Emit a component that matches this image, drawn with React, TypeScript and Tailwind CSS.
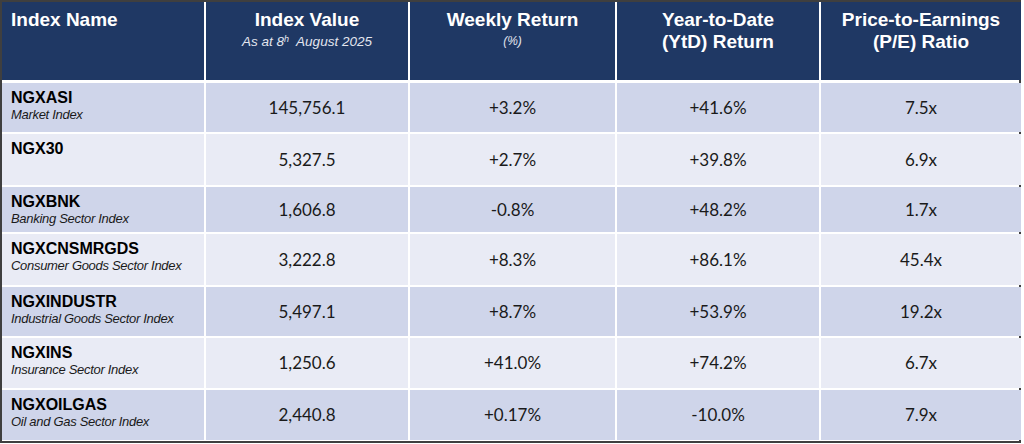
import React from "react";

type Row = {
  code: string;
  label?: string;
  value: string;
  weekly: string;
  ytd: string;
  pe: string;
  h: string;
  bg: string;
};

const rows: Row[] = [
  { code: "NGXASI", label: "Market Index", value: "145,756.1", weekly: "+3.2%", ytd: "+41.6%", pe: "7.5x", h: "h-[49px]", bg: "bg-[#cfd5ea]" },
  { code: "NGX30", value: "5,327.5", weekly: "+2.7%", ytd: "+39.8%", pe: "6.9x", h: "h-[51px]", bg: "bg-[#e9ebf5]" },
  { code: "NGXBNK", label: "Banking Sector Index", value: "1,606.8", weekly: "-0.8%", ytd: "+48.2%", pe: "1.7x", h: "h-[45px]", bg: "bg-[#cfd5ea]" },
  { code: "NGXCNSMRGDS", label: "Consumer Goods Sector Index", value: "3,222.8", weekly: "+8.3%", ytd: "+86.1%", pe: "45.4x", h: "h-[51px]", bg: "bg-[#e9ebf5]" },
  { code: "NGXINDUSTR", label: "Industrial Goods Sector Index", value: "5,497.1", weekly: "+8.7%", ytd: "+53.9%", pe: "19.2x", h: "h-[49px]", bg: "bg-[#cfd5ea]" },
  { code: "NGXINS", label: "Insurance Sector Index", value: "1,250.6", weekly: "+41.0%", ytd: "+74.2%", pe: "6.7x", h: "h-[50px]", bg: "bg-[#e9ebf5]" },
  { code: "NGXOILGAS", label: "Oil and Gas Sector Index", value: "2,440.8", weekly: "+0.17%", ytd: "-10.0%", pe: "7.9x", h: "h-[50px]", bg: "bg-[#cfd5ea]" },
];

const cols = "grid grid-cols-[202px_202px_205px_202px_200px] gap-x-[2px]";
const arial = "font-['Liberation_Sans',Arial,sans-serif]";
const num = "font-['Lato','Open_Sans',sans-serif] text-[17px] text-[#1a1a1a]";

export default function App() {
  return (
    <div className="w-[1024px] h-[444px] bg-white">
      <div className={`w-[1021px] h-[443px] border-2 border-[#3f3f3f] bg-white flex flex-col ${arial}`}>
        {/* Header */}
        <div className={`${cols} h-[78px] text-white text-[19px] leading-[22px] font-bold`}>
          <div className="bg-[#1f3864] pl-[9px] pt-[7px]">Index Name</div>
          <div className="bg-[#1f3864] pt-[7px] text-center">
            <div>Index Value</div>
            <div className="text-[13.5px] leading-[18px] font-normal italic text-[#e3e6ef] mt-[2px]">
              As at 8<sup className="text-[9px]">h</sup>&nbsp; August 2025
            </div>
          </div>
          <div className="bg-[#1f3864] pt-[7px] text-center">
            <div>Weekly Return</div>
            <div className="text-[12px] leading-[16px] font-normal italic text-[#e3e6ef] mt-[2px]">(%)</div>
          </div>
          <div className="bg-[#1f3864] pt-[7px] text-center">
            <div>Year-to-Date</div>
            <div>(YtD) Return</div>
          </div>
          <div className="bg-[#1f3864] pt-[7px] text-center">
            <div>Price-to-Earnings</div>
            <div>(P/E) Ratio</div>
          </div>
        </div>

        {/* Body */}
        <div className="flex flex-col gap-y-[2px] mt-[3px]">
          {rows.map((r) => (
            <div key={r.code} className={`${cols} ${r.h}`}>
              <div className={`${r.bg} pl-[9px] pt-[6px]`}>
                <div className="text-[16px] leading-[18px] font-bold text-black">{r.code}</div>
                {r.label && (
                  <div className="text-[13px] leading-[15px] italic text-[#1a1a1a] tracking-[-0.3px]">{r.label}</div>
                )}
              </div>
              <div className={`${r.bg} flex items-center justify-center ${num}`}>{r.value}</div>
              <div className={`${r.bg} flex items-center justify-center ${num}`}>{r.weekly}</div>
              <div className={`${r.bg} flex items-center justify-center ${num}`}>{r.ytd}</div>
              <div className={`${r.bg} flex items-center justify-center ${num}`}>{r.pe}</div>
            </div>
          ))}
        </div>
      </div>
    </div>
  );
}
